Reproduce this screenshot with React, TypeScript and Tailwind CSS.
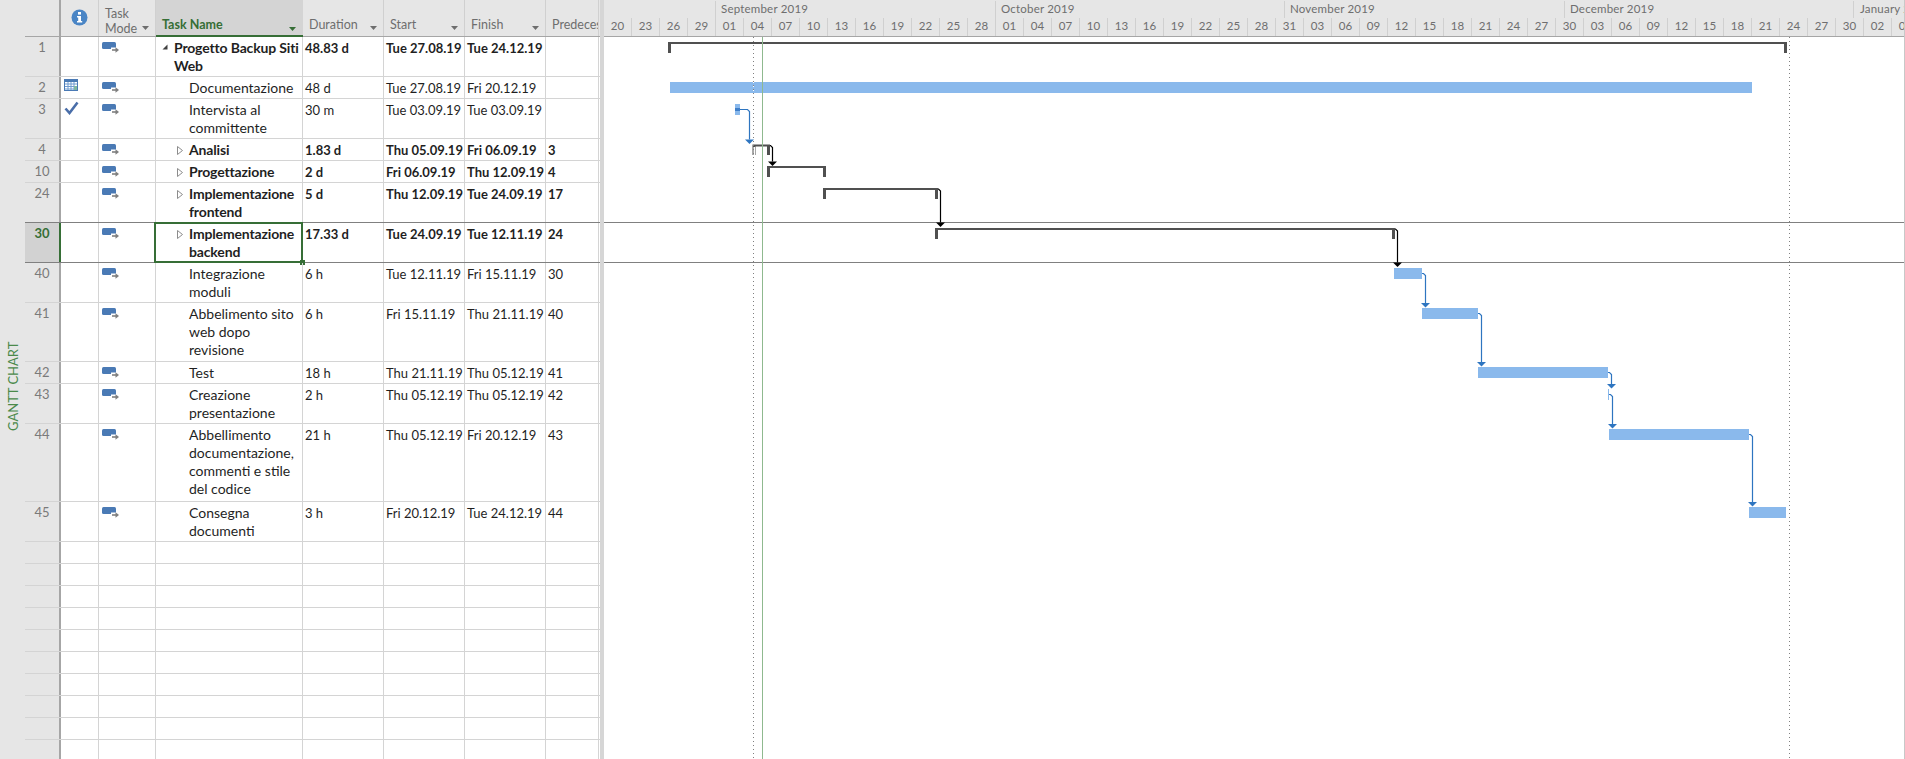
import React from 'react';

type Task = {
    id: string;
    name: string;
    duration?: string;
    start?: string;
    finish?: string;
    pred?: string;
    height: string;
    bold?: boolean;
    level?: number;
    expander?: 'open' | 'closed';
    indicator?: 'calendar' | 'check';
    line?: string;
    selected?: boolean;
};

const tasks: Task[] = [
    { id: '1', name: 'Progetto Backup Siti\nWeb', duration: '48.83 d', start: 'Tue 27.08.19', finish: 'Tue 24.12.19', height: 'h-[40px]', bold: true, level: 0, expander: 'open' },
    { id: '2', name: 'Documentazione', duration: '48 d', start: 'Tue 27.08.19', finish: 'Fri 20.12.19', height: 'h-[22px]', indicator: 'calendar' },
    { id: '3', name: 'Intervista al\ncommittente', duration: '30 m', start: 'Tue 03.09.19', finish: 'Tue 03.09.19', height: 'h-[40px]', indicator: 'check' },
    { id: '4', name: 'Analisi', duration: '1.83 d', start: 'Thu 05.09.19', finish: 'Fri 06.09.19', pred: '3', height: 'h-[22px]', bold: true, expander: 'closed' },
    { id: '10', name: 'Progettazione', duration: '2 d', start: 'Fri 06.09.19', finish: 'Thu 12.09.19', pred: '4', height: 'h-[22px]', bold: true, expander: 'closed' },
    { id: '24', name: 'Implementazione\nfrontend', duration: '5 d', start: 'Thu 12.09.19', finish: 'Tue 24.09.19', pred: '17', height: 'h-[40px]', bold: true, expander: 'closed', line: 'border-b-[#808080]' },
    { id: '30', name: 'Implementazione\nbackend', duration: '17.33 d', start: 'Tue 24.09.19', finish: 'Tue 12.11.19', pred: '24', height: 'h-[40px]', bold: true, expander: 'closed', line: 'border-b-[#808080]', selected: true },
    { id: '40', name: 'Integrazione\nmoduli', duration: '6 h', start: 'Tue 12.11.19', finish: 'Fri 15.11.19', pred: '30', height: 'h-[40px]' },
    { id: '41', name: 'Abbelimento sito\nweb dopo\nrevisione', duration: '6 h', start: 'Fri 15.11.19', finish: 'Thu 21.11.19', pred: '40', height: 'h-[59px]' },
    { id: '42', name: 'Test', duration: '18 h', start: 'Thu 21.11.19', finish: 'Thu 05.12.19', pred: '41', height: 'h-[22px]' },
    { id: '43', name: 'Creazione\npresentazione', duration: '2 h', start: 'Thu 05.12.19', finish: 'Thu 05.12.19', pred: '42', height: 'h-[40px]' },
    { id: '44', name: 'Abbellimento\ndocumentazione,\ncommenti e stile\ndel codice', duration: '21 h', start: 'Thu 05.12.19', finish: 'Fri 20.12.19', pred: '43', height: 'h-[78px]' },
    { id: '45', name: 'Consegna\ndocumenti', duration: '3 h', start: 'Fri 20.12.19', finish: 'Tue 24.12.19', pred: '44', height: 'h-[40px]' },
];

const days = ['20', '23', '26', '29', '01', '04', '07', '10', '13', '16', '19', '22', '25', '28', '01', '04', '07', '10', '13', '16', '19', '22', '25', '28', '31', '03', '06', '09', '12', '15', '18', '21', '24', '27', '30', '03', '06', '09', '12', '15', '18', '21', '24', '27', '30', '02', '05'];

const cellClass = 'shrink-0 border-r border-[#d4d4d4] overflow-hidden';
const dataClass = 'shrink-0 border-r border-[#d4d4d4] overflow-hidden whitespace-nowrap pt-[2px] pl-[2px] text-[13px]';

const TaskModeIcon = () => (
    <svg width="18" height="13" viewBox="0 0 18 13" className="block">
        <rect x="0" y="0" width="14" height="7" rx="1.5" fill="#4a7ab5" />
        <path d="M9 7.5h6" stroke="#fff" strokeWidth="4" />
        <path d="M10 8h5" stroke="#7f7f7f" strokeWidth="1.6" />
        <path d="M13.5 5.2L17 8l-3.500 2.800z" fill="#7f7f7f" />
    </svg>
);

const CalendarIcon = () => (
    <svg width="14" height="12" viewBox="0 0 14 12" className="block">
        <rect x="0.500" y="0.500" width="13" height="11" fill="#fff" stroke="#4a7ab5" />
        <rect x="0" y="0" width="14" height="3" fill="#4a7ab5" />
        <path d="M1 5h12M1 7.500h12M1 10h12M4 3v8M7 3v8M10 3v8" stroke="#6f9bd0" strokeWidth="1" />
        <rect x="10" y="7" width="3" height="4" fill="#7fb7a0" />
    </svg>
);

const CheckIcon = () => (
    <svg width="15" height="14" viewBox="0 0 15 14" className="block">
        <path d="M1.500 7.500L5.500 12L13.500 1.500" fill="none" stroke="#4a6ea9" strokeWidth="2.600" />
    </svg>
);

const InfoIcon = () => (
    <svg width="17" height="17" viewBox="0 0 17 17" className="block">
        <circle cx="8.500" cy="8.500" r="8" fill="#4a85c5" />
        <rect x="7" y="3" width="3" height="2.600" fill="#fff" />
        <path d="M6 7h4v5h1.200v1.600H6V12h1.200V8.600H6z" fill="#fff" />
    </svg>
);

const SortArrow = ({ color = '#6e6e6e' }: { color?: string }) => (
    <svg width="7" height="4" viewBox="0 0 7 4" className="block shrink-0">
        <path d="M0 0h7L3.500 4z" fill={color} />
    </svg>
);

const Expander = ({ kind }: { kind: 'open' | 'closed' }) => kind === 'open' ? (
    <svg width="6" height="6" viewBox="0 0 6 6" className="block">
        <path d="M5.500 0.500v5h-5z" fill="#404040" />
    </svg>
) : (
    <svg width="6" height="9" viewBox="0 0 6 9" className="block">
        <path d="M0.500 0.500L5.500 4.500L0.500 8.500z" fill="#fff" stroke="#8c8c8c" />
    </svg>
);

const HeaderCell = ({ label, width, arrow = true }: { label: string; width: string; arrow?: boolean }) => (
    <div className={`${width} shrink-0 border-r border-[#d0d0d0] flex items-end justify-between pl-[6px] pr-[6px] pb-[2px] overflow-hidden`}>
        <span className="leading-[18px] whitespace-nowrap">{label}</span>
        {arrow && <span className="mb-[4px]"><SortArrow /></span>}
    </div>
);

const Row = ({ task }: { task: Task }) => (
    <div className={`flex ${task.height} border-b ${task.line ?? 'border-b-[#d4d4d4]'} shrink-0 ${task.bold ? 'font-bold' : ''}`}>
        <div className={`w-[36px] shrink-0 border-r-2 text-center text-[13px] leading-[18px] pt-[1px] ${task.selected ? 'bg-[#d2d2d2] border-r-[#366e36] text-[#366e36] font-bold' : 'border-r-[#a6a6a6] text-[#7a7a7a] font-normal'}`}>
            {task.id}
        </div>
        <div className={`${cellClass} w-[38px] pl-[3px] pt-[2px]`}>
            {task.indicator === 'calendar' && <CalendarIcon />}
            {task.indicator === 'check' && <CheckIcon />}
        </div>
        <div className={`${cellClass} w-[57px] pl-[3px] pt-[5px]`}>
            <TaskModeIcon />
        </div>
        <div className={`w-[147px] shrink-0 border-r border-[#d4d4d4] relative flex pt-[2px] ${task.level === 0 ? 'pl-[6px]' : 'pl-[21px]'}`}>
            <div className="w-[12px] shrink-0 flex pt-[5px]">
                {task.expander && <Expander kind={task.expander} />}
            </div>
            <div className={`whitespace-pre-line ${task.bold ? 'tracking-[-0.15px]' : ''}`}>{task.name}</div>
            {task.selected && (
                <>
                    <div className="absolute -left-[2px] -top-[1px] -right-[1px] -bottom-[1px] border-2 border-[#366e36]" />
                    <div className="absolute -right-[3px] -bottom-[3px] w-[5px] h-[5px] bg-[#366e36]" />
                </>
            )}
        </div>
        <div className={`${dataClass} w-[81px]`}>{task.duration}</div>
        <div className={`${dataClass} w-[81px]`}>{task.start}</div>
        <div className={`${dataClass} w-[81px]`}>{task.finish}</div>
        <div className={`${dataClass} w-[53px]`}>{task.pred}</div>
    </div>
);

const EmptyRow = () => (
    <div className="flex h-[22px] border-b border-b-[#d4d4d4] shrink-0">
        <div className="w-[36px] shrink-0 border-r-2 border-r-[#a6a6a6]" />
        <div className={`${cellClass} w-[38px]`} />
        <div className={`${cellClass} w-[57px]`} />
        <div className={`${cellClass} w-[147px]`} />
        <div className={`${cellClass} w-[81px]`} />
        <div className={`${cellClass} w-[81px]`} />
        <div className={`${cellClass} w-[81px]`} />
        <div className={`${cellClass} w-[53px]`} />
    </div>
);

const Bracket = ({ x1, x2, y }: { x1: number; x2: number; y: number }) => (
    <path d={`M${x1} ${y + 11}V${y}H${x2}V${y + 11}H${x2 - 3}V${y + 2}H${x1 + 3}V${y + 11}z`} fill="#505050" />
);

const Link = ({ x, y1, y2, from, color }: { x: number; y1: number; y2: number; from: number; color: string }) => (
    <g>
        <path d={`M${from} ${y1}H${x - 2}L${x} ${y1 + 2}V${y2}`} fill="none" stroke={color} strokeWidth={1.200} />
        <path d={`M${x - 4.500} ${y2}H${x + 4.500}L${x} ${y2 + 4.500}z`} fill={color} />
    </g>
);

const GanttChart = () => (
    <svg width="1301" height="759" viewBox="604 0 1301 759" className="absolute left-0 top-0 block">
        <path d="M604 222.500H1905M604 262.500H1905" stroke="#808080" strokeWidth="1" />

        <Bracket x1={668} x2={1787} y={42} />
        <rect x="670" y="82" width="1082" height="11" fill="#8ab9ec" />

        <rect x="735" y="104" width="5" height="11" fill="#8ab9ec" />
        <rect x="735" y="108" width="5" height="3" fill="#3f7fc9" />
        <Link x={749.500} y1={109.500} y2={139.500} from={740} color="#2e75c0" />

        <path d="M752.500 155V144.500H770V155H767V146.500H755.500V155z" fill="#505050" />
        <rect x="753.500" y="147" width="1.500" height="8" fill="#fff" />
        <Link x={772.500} y1={145.500} y2={161.500} from={770} color="#000" />

        <Bracket x1={767} x2={826} y={166} />
        <Bracket x1={823} x2={938} y={188} />
        <Link x={940.500} y1={189} y2={222.500} from={938} color="#000" />

        <Bracket x1={935} x2={1395} y={228} />
        <Link x={1397.500} y1={229} y2={262.500} from={1395} color="#000" />

        <rect x="1394" y="268" width="28" height="11" fill="#8ab9ec" />
        <Link x={1425.500} y1={273.500} y2={303} from={1422} color="#2e75c0" />
        <rect x="1422" y="308" width="56" height="11" fill="#8ab9ec" />
        <Link x={1481.500} y1={313.500} y2={362} from={1478} color="#2e75c0" />
        <rect x="1478" y="367" width="130" height="11" fill="#8ab9ec" />
        <Link x={1611.500} y1={372.500} y2={384} from={1608} color="#2e75c0" />
        <rect x="1608" y="389" width="1" height="11" fill="#8ab9ec" />
        <Link x={1612.500} y1={394.500} y2={424} from={1609} color="#2e75c0" />
        <rect x="1609" y="429" width="140" height="11" fill="#8ab9ec" />
        <Link x={1752.500} y1={434.500} y2={502} from={1749} color="#2e75c0" />
        <rect x="1749" y="507" width="37" height="11" fill="#8ab9ec" />

        <path d="M753.500 37V759M1789.500 37V759" stroke="#808080" strokeWidth="1" strokeDasharray="1 3" />
        <path d="M753.500 82V93" stroke="#ffffff" strokeWidth="1" strokeDasharray="1 3" />
        <path d="M762.500 37V759" stroke="#8fb98f" strokeWidth="1" />
    </svg>
);

export default function App() {
    return (
        <div className="flex w-[1905px] h-[759px] overflow-hidden bg-white text-[14px] leading-[18px] text-[#1f1f1f] font-[family-name:Lato,sans-serif]">
            <div className="w-[25px] shrink-0 bg-[#e6e6e6] flex justify-center pt-[344px]">
                <span className="h-[87px] [writing-mode:vertical-rl] rotate-180 text-[#4b8a4b] text-[13px] leading-[18px] whitespace-nowrap">GANTT CHART</span>
            </div>

            <div className="w-[575px] shrink-0 flex flex-col bg-[linear-gradient(to_right,#e6e6e6_35px,#ffffff_35px)] overflow-hidden">
                <div className="flex h-[37px] shrink-0 bg-[#e6e6e6] border-b border-[#a6a6a6] text-[#6e6e6e] text-[12.5px]">
                    <div className="w-[36px] shrink-0 border-r-2 border-r-[#a6a6a6]" />
                    <div className="w-[38px] shrink-0 border-r border-[#d0d0d0] flex items-center justify-center pb-[1px]">
                        <InfoIcon />
                    </div>
                    <div className="w-[57px] shrink-0 border-r border-[#d0d0d0] flex items-end justify-between pl-[6px] pr-[6px]">
                        <span className="leading-[15px]">Task<br />Mode</span>
                        <span className="mb-[6px]"><SortArrow /></span>
                    </div>
                    <div className="w-[147px] shrink-0 bg-[#d4d4d4] border-b-2 border-[#366e36] -mb-[1px] flex items-end justify-between pl-[6px] pr-[7px] pb-[1px] text-[#366e36] font-bold">
                        <span className="leading-[18px]">Task Name</span>
                        <span className="mb-[3px]"><SortArrow color="#366e36" /></span>
                    </div>
                    <HeaderCell label="Duration" width="w-[81px]" />
                    <HeaderCell label="Start" width="w-[81px]" />
                    <HeaderCell label="Finish" width="w-[81px]" />
                    <HeaderCell label="Predecessors" width="w-[53px]" arrow={false} />
                </div>
                {tasks.map(task => <Row key={task.id} task={task} />)}
                {Array.from({ length: 10 }).map((_, i) => <EmptyRow key={i} />)}
            </div>

            <div className="w-[4px] shrink-0 bg-[#d6d6d6]" />

            <div className="relative flex-1 min-w-0 overflow-hidden border-r border-[#c8c8c8]">
                <div className="h-[37px] bg-[#e6e6e6] border-b border-[#a6a6a6] text-[#6e6e6e] text-[11.5px] overflow-hidden">
                    <div className="flex h-[18px] pt-[1px] leading-[16px] whitespace-nowrap tracking-[0.2px]">
                        <div className="w-[112px] shrink-0 border-r border-[#d0d0d0]" />
                        <div className="w-[280px] shrink-0 border-r border-[#d0d0d0] pl-[5px]">September 2019</div>
                        <div className="w-[289px] shrink-0 border-r border-[#d0d0d0] pl-[5px]">October 2019</div>
                        <div className="w-[280px] shrink-0 border-r border-[#d0d0d0] pl-[5px]">November 2019</div>
                        <div className="w-[289px] shrink-0 border-r border-[#d0d0d0] pl-[5px]">December 2019</div>
                        <div className="w-[60px] shrink-0 pl-[6px]">January 2020</div>
                    </div>
                    <div className="flex h-[18px] w-[1316px] leading-[16px]">
                        {days.map((d, i) => (
                            <div key={i} className="w-[28px] shrink-0 border-r border-[#d0d0d0] text-center">{d}</div>
                        ))}
                    </div>
                </div>
                <GanttChart />
            </div>
        </div>
    );
}
